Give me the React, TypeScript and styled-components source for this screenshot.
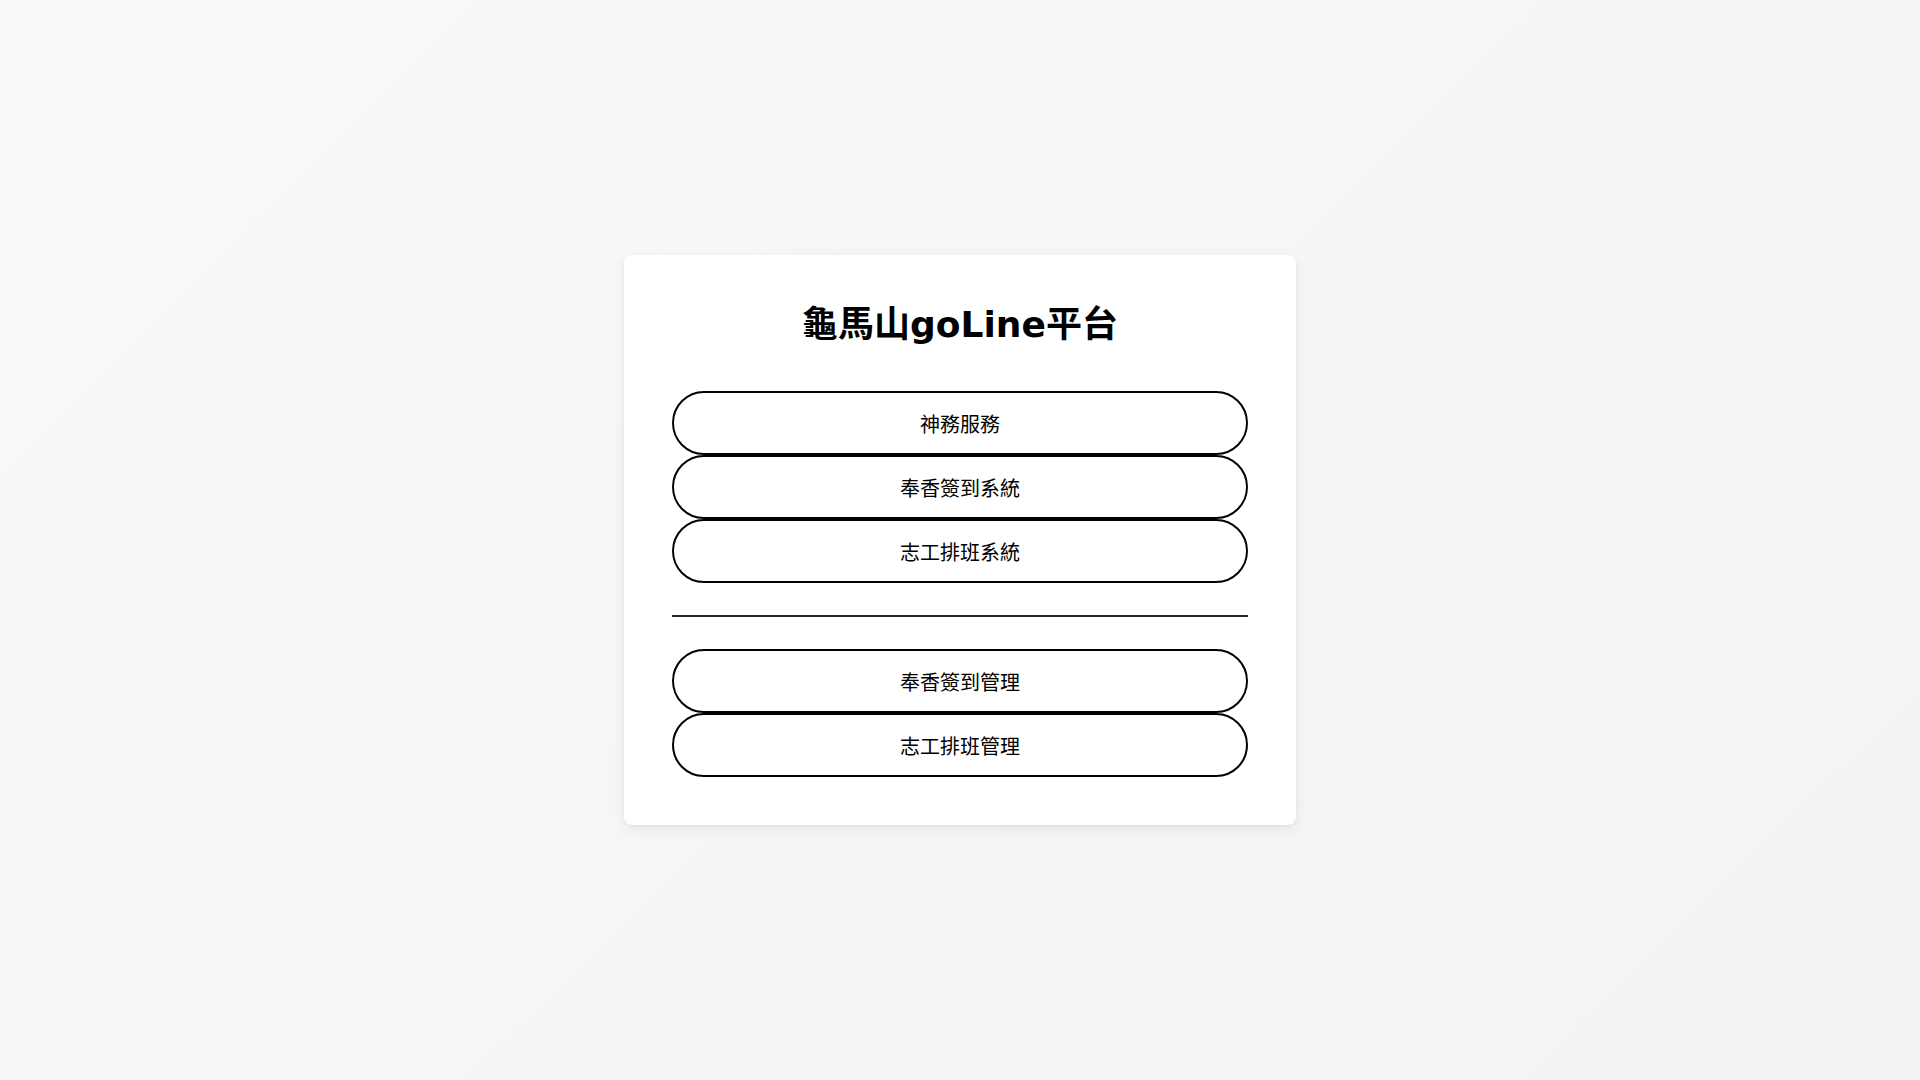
import React from "react";
import styled, { createGlobalStyle } from "styled-components";

const GlobalStyle = createGlobalStyle`
  html, body {
    margin: 0;
    padding: 0;
  }
  body {
    font-family: "DejaVu Sans", "Noto Sans CJK TC", sans-serif;
    background: linear-gradient(135deg, #f8f9fa 0%, #f1f3f5 100%);
    min-height: 100vh;
    color: #000;
  }
  * { box-sizing: border-box; }
`;

const Page = styled.main`
  min-height: 100vh;
  display: flex;
  align-items: center;
  justify-content: center;
`;

const Card = styled.section`
  width: 672px;
  padding: 48px;
  background: #ffffff;
  border-radius: 8px;
  box-shadow: 0 4px 14px rgba(0, 0, 0, 0.07), 0 1px 3px rgba(0, 0, 0, 0.04);
  display: flex;
  flex-direction: column;
`;

const Title = styled.h1`
  margin: 0 0 44px;
  font-size: 36px;
  line-height: 44px;
  font-weight: 700;
  text-align: center;
  color: #000;
`;

const ButtonGroup = styled.nav`
  display: flex;
  flex-direction: column;
`;

const PillButton = styled.button`
  height: 64px;
  width: 100%;
  background: #ffffff;
  border: 2px solid #000;
  border-radius: 32px;
  font-family: "DejaVu Sans", "Noto Sans CJK TC", sans-serif;
  font-size: 20px;
  color: #000;
  cursor: pointer;
  display: flex;
  align-items: center;
  justify-content: center;
  padding: 0;
`;

const Divider = styled.hr`
  margin: 32px 0;
  height: 2px;
  border: none;
  background: #23272f;
`;

const userLinks = ["神務服務", "奉香簽到系統", "志工排班系統"];
const adminLinks = ["奉香簽到管理", "志工排班管理"];

export default function App() {
  return (
    <>
      <GlobalStyle />
      <Page>
        <Card>
          <Title>龜馬山goLine平台</Title>
          <ButtonGroup>
            {userLinks.map((l) => (
              <PillButton key={l}>{l}</PillButton>
            ))}
          </ButtonGroup>
          <Divider />
          <ButtonGroup>
            {adminLinks.map((l) => (
              <PillButton key={l}>{l}</PillButton>
            ))}
          </ButtonGroup>
        </Card>
      </Page>
    </>
  );
}
